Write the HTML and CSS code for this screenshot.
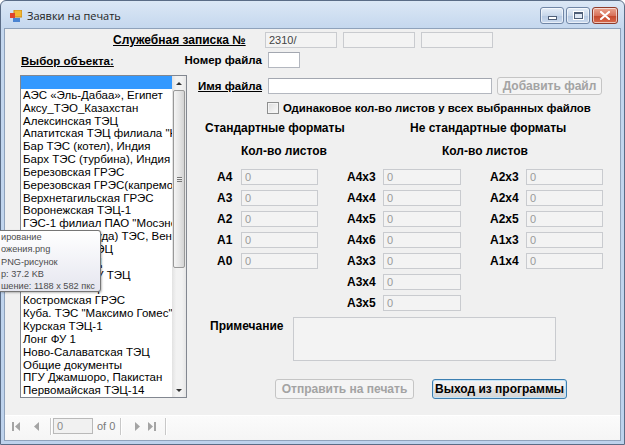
FILE: index.html
```html
<!DOCTYPE html>
<html lang="ru">
<head>
  <meta charset="UTF-8">
  <meta name="viewport" content="width=device-width, initial-scale=1.0">
  <title>Заявки на печать</title>
  <link rel="stylesheet" href="styles.css">
</head>
<body>
  <div class="window">
    <div class="titlebar">
      <svg class="app-icon" width="12" height="12" viewBox="0 0 12 12">
        <rect x="4" y="0" width="8" height="7" fill="#f2b632" stroke="#c98a16" stroke-width="1"/>
        <rect x="0" y="3" width="5" height="5" fill="#e0442c"/>
        <rect x="3" y="8" width="7" height="4" fill="#4a84d2"/>
      </svg>
      <span class="title">Заявки на печать</span>
      <div class="caption-buttons">
        <span class="cap-btn"><i class="cap-min"></i></span>
        <span class="cap-btn"><i class="cap-max"></i></span>
        <span class="cap-btn cap-close">
          <svg width="10" height="9" viewBox="0 0 10 9">
            <path d="M1 1 L9 8 M9 1 L1 8" stroke="#fff" stroke-width="2.2" stroke-linecap="round"/>
          </svg>
        </span>
      </div>
    </div>

    <div class="client">
      <div class="form">
        <div class="memo-row">
          <span class="label link memo-label">Служебная записка №</span>
          <div class="textbox off dark">2310/</div>
          <div class="textbox off"></div>
          <div class="textbox off"></div>
        </div>

        <div class="main">
          <div class="objects">
            <div class="label link obj-label">Выбор объекта:</div>
            <div class="listbox">
              <ul class="items">
                <li class="selected">&nbsp;</li>
                <li>АЭС «Эль-Дабаа», Египет</li>
                <li>Аксу_ТЭО_Казахстан</li>
                <li>Алексинская ТЭЦ</li>
                <li>Апатитская ТЭЦ филиала "Кольский"</li>
                <li>Бар ТЭС (котел), Индия</li>
                <li>Барх ТЭС (турбина), Индия</li>
                <li>Березовская ГРЭС</li>
                <li>Березовская ГРЭС(капремонт)</li>
                <li>Верхнетагильская ГРЭС</li>
                <li>Воронежская ТЭЦ-1</li>
                <li>ГЭС-1 филиал ПАО "Мосэнерго"</li>
                <li>Дунамента (Буда) ТЭС, Венгрия</li>
                <li>Ивановская ТЭЦ</li>
                <li>Ижевская ТЭЦ</li>
                <li>Кировская ПГУ ТЭЦ</li>
                <li>Кольская ТЭЦ</li>
                <li>Костромская ГРЭС</li>
                <li>Куба. ТЭС "Максимо Гомес", Куба</li>
                <li>Курская ТЭЦ-1</li>
                <li>Лонг ФУ 1</li>
                <li>Ново-Салаватская ТЭЦ</li>
                <li>Общие документы</li>
                <li>ПГУ Джамшоро, Пакистан</li>
                <li>Первомайская ТЭЦ-14</li>
              </ul>
              <div class="scrollbar">
                <span class="arrow up"></span>
                <span class="thumb"><i></i></span>
                <span class="arrow down"></span>
              </div>
            </div>
          </div>

          <div class="details">
            <div class="field-row">
              <span class="label field-label">Номер файла</span>
              <div class="textbox num-box"></div>
            </div>
            <div class="field-row file-row">
              <span class="label link field-label">Имя файла</span>
              <div class="textbox name-box"></div>
              <span class="button off add-btn">Добавить файл</span>
            </div>
            <div class="check-row">
              <span class="checkbox"></span>
              <span class="label check-label">Одинаковое кол-во листов у всех выбранных файлов</span>
            </div>

            <div class="heads">
              <span class="label head-std">Стандартные форматы</span>
              <span class="label">Не стандартные форматы</span>
            </div>
            <div class="heads count-heads">
              <span class="label head-count">Кол-во листов</span>
              <span class="label">Кол-во листов</span>
            </div>

            <div class="formats">
              <div class="format-col std">
                <div class="format"><span class="label">A4</span><div class="textbox off">0</div></div>
                <div class="format"><span class="label">A3</span><div class="textbox off">0</div></div>
                <div class="format"><span class="label">A2</span><div class="textbox off">0</div></div>
                <div class="format"><span class="label">A1</span><div class="textbox off">0</div></div>
                <div class="format"><span class="label">A0</span><div class="textbox off">0</div></div>
              </div>
              <div class="format-col">
                <div class="format"><span class="label">A4x3</span><div class="textbox off">0</div></div>
                <div class="format"><span class="label">A4x4</span><div class="textbox off">0</div></div>
                <div class="format"><span class="label">A4x5</span><div class="textbox off">0</div></div>
                <div class="format"><span class="label">A4x6</span><div class="textbox off">0</div></div>
                <div class="format"><span class="label">A3x3</span><div class="textbox off">0</div></div>
                <div class="format"><span class="label">A3x4</span><div class="textbox off">0</div></div>
                <div class="format"><span class="label">A3x5</span><div class="textbox off">0</div></div>
              </div>
              <div class="format-col">
                <div class="format"><span class="label">A2x3</span><div class="textbox off">0</div></div>
                <div class="format"><span class="label">A2x4</span><div class="textbox off">0</div></div>
                <div class="format"><span class="label">A2x5</span><div class="textbox off">0</div></div>
                <div class="format"><span class="label">A1x3</span><div class="textbox off">0</div></div>
                <div class="format"><span class="label">A1x4</span><div class="textbox off">0</div></div>
              </div>
            </div>

            <div class="note-row">
              <span class="label note-label">Примечание</span>
              <div class="textbox off note-box"></div>
            </div>

            <div class="actions">
              <span class="button off send-btn">Отправить на печать</span>
              <span class="button default exit-btn">Выход из программы</span>
            </div>
          </div>
        </div>
      </div>

      <div class="navigator">
        <svg class="nav-icon first" width="8" height="9" viewBox="0 0 8 9"><rect width="2" height="9"/><path d="M8 0 L3 4.5 L8 9Z"/></svg>
        <svg class="nav-icon prev" width="5" height="9" viewBox="0 0 5 9"><path d="M5 0 L0 4.5 L5 9Z"/></svg>
        <span class="sep"></span>
        <div class="nav-box">0</div>
        <span class="nav-text">of 0</span>
        <span class="sep"></span>
        <svg class="nav-icon next" width="5" height="9" viewBox="0 0 5 9"><path d="M0 0 L5 4.5 L0 9Z"/></svg>
        <svg class="nav-icon last" width="8" height="9" viewBox="0 0 8 9"><path d="M0 0 L5 4.5 L0 9Z"/><rect x="6" width="2" height="9"/></svg>
        <span class="sep"></span>
      </div>
    </div>
  </div>

  <div class="tooltip">
    <div>ирование</div>
    <div>ожения.png</div>
    <div>PNG-рисунок</div>
    <div>р: 37.2 KB</div>
    <div>шение: 1188 x 582 пкс</div>
  </div>
</body>
</html>
```

FILE: styles.css
```css
* {
  margin: 0;
  padding: 0;
  box-sizing: border-box;
}

body {
  background: #fff;
  font-family: 'Liberation Sans', Arial, sans-serif;
  font-size: 12px;
  color: #000;
  overflow: hidden;
}

.window {
  width: 625px;
  height: 445px;
  display: flex;
  flex-direction: column;
  border: 1px solid #5a6c86;
  border-radius: 6px 6px 0 0;
  background: linear-gradient(#dbe7f5, #c4d7ee 28px, #bdd2ec);
}

.titlebar {
  height: 27px;
  display: flex;
  align-items: center;
  padding: 0 6px 0 9px;
}

.app-icon {
  margin-top: 2px;
}

.title {
  margin-left: 5px;
  margin-top: 2px;
  font-family: 'Open Sans', 'Liberation Sans', sans-serif;
  font-size: 11px;
  color: #1e1e1e;
}

.caption-buttons {
  margin-left: auto;
  display: flex;
  gap: 2px;
  align-self: flex-start;
  margin-top: 6px;
}

.cap-btn {
  width: 24px;
  height: 17px;
  display: flex;
  align-items: center;
  justify-content: center;
  border: 1px solid #7086a6;
  border-radius: 3px;
  background: linear-gradient(#e6eef8, #c9d8eb 50%, #b6c9e2 51%, #cbdaee);
  box-shadow: inset 0 0 0 1px rgba(255, 255, 255, 0.6);
}

.cap-min {
  width: 9px;
  height: 4px;
  margin-top: 4px;
  background: #fff;
  border: 1px solid #4f5f78;
}

.cap-max {
  width: 9px;
  height: 7px;
  border: 1px solid #4f5f78;
  border-top-width: 2px;
  background: #dfe8f4;
  box-shadow: 0 0 0 1px #fff;
}

.cap-close {
  width: 26px;
  border-color: #8e3b2b;
  background: linear-gradient(#eaa591, #d8715a 50%, #c4452a 51%, #d86a4c);
}

.client {
  flex: 1;
  margin: 0 3px 3px;
  display: flex;
  flex-direction: column;
  border: 1px solid #8fa2bb;
  background: #f0f0f0;
}

.form {
  flex: 1;
  padding-top: 3px;
}

.label {
  font-weight: bold;
  line-height: 14px;
  white-space: nowrap;
}

.link {
  text-decoration: underline;
}

.textbox {
  height: 16px;
  border: 1px solid #b3b7bf;
  border-top-color: #a3a7b0;
  background: #fff;
  font-size: 11px;
  line-height: 14px;
  padding-left: 3px;
  color: #444;
}

.textbox.off {
  background: #f3f3f3;
  border-color: #c9cbcf;
  color: #9a9a9a;
}

.textbox.dark {
  color: #444;
}

.memo-row {
  display: flex;
  align-items: center;
  height: 16px;
  padding-left: 108px;
}

.memo-label {
  width: 152px;
}

.memo-row .textbox {
  width: 72px;
  margin-right: 6px;
}

.main {
  display: flex;
}

.objects {
  margin-left: 15px;
  width: 167px;
}

.obj-label {
  margin-top: 6px;
  margin-left: 1px;
  font-size: 11.5px;
}

.listbox {
  margin-top: 7px;
  height: 323px;
  display: flex;
  border: 1px solid #828790;
  background: #fff;
}

.items {
  flex: 1;
  list-style: none;
  overflow: hidden;
}

.items li {
  height: 12.85px;
  line-height: 12.85px;
  padding-left: 2px;
  white-space: nowrap;
  font-size: 11.5px;
}

.items .selected {
  background: #3399ff;
}

.scrollbar {
  width: 14px;
  display: flex;
  flex-direction: column;
  background: linear-gradient(90deg, #e2e2e2, #f2f2f2 30%, #f2f2f2 70%, #e6e6e6);
}

.arrow {
  height: 14px;
  display: flex;
  align-items: center;
  justify-content: center;
}

.arrow::before {
  content: '';
  border-left: 3px solid transparent;
  border-right: 3px solid transparent;
}

.arrow.up::before {
  border-bottom: 3px solid #333;
}

.arrow.down {
  margin-top: auto;
}

.arrow.down::before {
  border-top: 3px solid #333;
}

.thumb {
  height: 178px;
  margin: 0 1px;
  display: flex;
  align-items: center;
  justify-content: center;
  border: 1px solid #999;
  border-radius: 2px;
  background: linear-gradient(90deg, #f4f4f4, #e6e6e6 50%, #d4d4d4);
}

.thumb i {
  width: 5px;
  height: 5px;
  border-top: 1px solid #777;
  border-bottom: 1px solid #777;
  box-shadow: inset 0 1px 0 #f4f4f4, inset 0 2px 0 #777;
}

.details {
  margin-left: 3px;
  display: flex;
  flex-direction: column;
}

.field-row {
  display: flex;
  align-items: center;
  height: 16px;
  margin-top: 4px;
}

.field-label {
  width: 72px;
  display: flex;
  justify-content: flex-end;
  margin-right: 6px;
  font-size: 11.5px;
}

.num-box {
  width: 32px;
}

.file-row {
  height: 18px;
  margin-top: 9px;
}

.name-box {
  width: 224px;
}

.button {
  height: 18px;
  display: flex;
  align-items: center;
  justify-content: center;
  font-weight: bold;
  border: 1px solid #707070;
  border-radius: 3px;
  background: linear-gradient(#f2f2f2, #ebebeb 50%, #dddddd 51%, #cfcfcf);
}

.button.off {
  color: #a3a3a3;
  border-color: #c5c5c5;
  background: #f4f4f4;
}

.add-btn {
  width: 105px;
  margin-left: 5px;
}

.check-row {
  display: flex;
  align-items: center;
  height: 14px;
  margin-top: 6px;
  padding-left: 77px;
}

.checkbox {
  width: 12px;
  height: 12px;
  margin-right: 4px;
  border: 1px solid #8e8f8f;
  background: linear-gradient(135deg, #dcdcdc, #fafafa);
  box-shadow: inset 0 0 0 1px #f4f4f4;
}

.check-label {
  font-size: 11.4px;
}

.heads {
  display: flex;
  margin-top: 6px;
  padding-left: 15px;
}

.head-std {
  width: 205px;
}

.count-heads {
  margin-top: 9px;
  padding-left: 51px;
}

.head-count {
  width: 201px;
}

.formats {
  display: grid;
  grid-template-columns: 101px 114px 113px;
  column-gap: 29px;
  align-items: start;
  margin-top: 11px;
  margin-left: 27px;
}

.format-col {
  display: flex;
  flex-direction: column;
  gap: 5px;
}

.format {
  display: flex;
  align-items: center;
  height: 16px;
}

.format .label {
  width: 36px;
}

.format .textbox {
  flex: 1;
}

.std .format .label {
  width: 24px;
}

.note-row {
  display: flex;
  margin-top: 6px;
  padding-left: 20px;
}

.note-label {
  width: 83px;
  padding-top: 2px;
}

.note-box {
  width: 263px;
  height: 44px;
}

.actions {
  display: flex;
  gap: 18px;
  margin-top: 18px;
  padding-left: 85px;
}

.actions .button {
  height: 20px;
}

.send-btn {
  width: 139px;
}

.exit-btn {
  width: 135px;
}

.button.default {
  border-color: #3c7fb1;
  background: linear-gradient(#f4f4f4, #ececec 50%, #e0e0e0 51%, #d6d6d6);
  box-shadow: inset 0 0 0 1px #c4e3f7;
}

.navigator {
  height: 25px;
  display: flex;
  align-items: center;
  padding-bottom: 4px;
  background: linear-gradient(#fbfbfb, #f5f5f5);
  border-top: 1px solid #fff;
  fill: #a4a4a4;
}

.nav-icon {
  flex: none;
}

.first {
  margin-left: 7px;
}

.prev {
  margin-left: 14px;
}

.sep {
  width: 1px;
  height: 17px;
  margin: 0 3px 0 11px;
  background: #c8c8c8;
  box-shadow: 1px 0 0 #fff;
}

.nav-box {
  width: 40px;
  height: 16px;
  margin-left: -1px;
  padding-left: 3px;
  border: 1px solid #b9b9b9;
  background: #f1f1f1;
  font-size: 11px;
  line-height: 14px;
  color: #8a8a8a;
}

.nav-text {
  margin-left: 4px;
  font-size: 11px;
  color: #7a7a7a;
}

.nav-text + .sep {
  margin-left: 5px;
}

.next {
  margin-left: 11px;
}

.last {
  margin-left: 8px;
}

.last + .sep {
  margin-left: 9px;
}

.tooltip {
  position: absolute;
  left: 0;
  top: 230px;
  width: 101px;
  height: 62px;
  padding-left: 1px;
  border: 1px solid #767676;
  border-left: none;
  border-radius: 0 3px 3px 0;
  background: linear-gradient(#ffffff, #e5e6ef);
  box-shadow: 1px 1px 2px rgba(0, 0, 0, 0.25);
  font-family: 'Liberation Sans', Arial, sans-serif;
  font-size: 9.2px;
  line-height: 12.3px;
  color: #4c4c4c;
  white-space: nowrap;
  overflow: hidden;
}
```
